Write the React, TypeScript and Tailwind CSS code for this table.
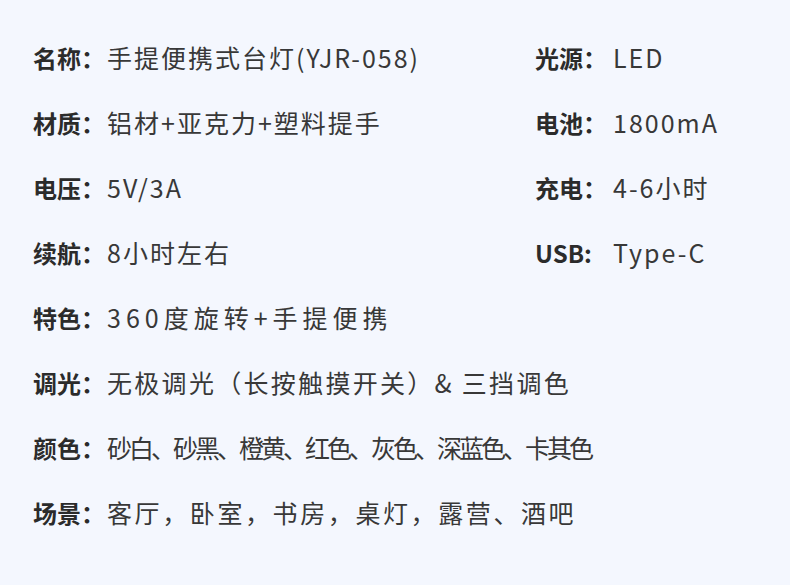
import React from 'react';

const pairs = [
  ['名称：', '手提便携式台灯(YJR-058)', '光源：', 'LED'],
  ['材质：', '铝材+亚克力+塑料提手', '电池：', '1800mA'],
  ['电压：', '5V/3A', '充电：', '4-6小时'],
  ['续航：', '8小时左右', 'USB:', 'Type-C'],
];

const rows = [
  { label: '特色：', value: '360度旋转+手提便携', track: 'tracking-[5px]' },
  { label: '调光：', value: '无极调光（长按触摸开关）& 三挡调色', track: 'tracking-[2.3px]' },
  { label: '颜色：', value: '砂白、砂黑、橙黄、红色、灰色、深蓝色、卡其色', track: 'tracking-[-3px]' },
  { label: '场景：', value: '客厅，卧室，书房，桌灯，露营、酒吧', track: 'tracking-[2.6px]' },
];

export default function App() {
  return (
    <div className="w-[790px] h-[585px] bg-[#f4f7fe] pt-[25px] pl-[33px] text-[25px] leading-none font-['Noto_Sans_CJK_SC',sans-serif]">
      {pairs.map(([l1, v1, l2, v2]) => (
        <div key={l1} className="flex h-[65px] items-center">
          <div className="flex w-[502px] items-center">
            <span className="w-[74px] shrink-0 whitespace-nowrap text-[24px] font-bold text-[#2b2b2b]">{l1}</span>
            <span className="whitespace-nowrap text-[#383838] tracking-[2px]">{v1}</span>
          </div>
          <div className="flex items-center">
            <span className="w-[78px] shrink-0 whitespace-nowrap text-[24px] font-bold text-[#2b2b2b]">{l2}</span>
            <span className="whitespace-nowrap text-[#383838] tracking-[2px]">{v2}</span>
          </div>
        </div>
      ))}
      {rows.map((r) => (
        <div key={r.label} className="flex h-[65px] items-center">
          <span className="w-[74px] shrink-0 whitespace-nowrap text-[24px] font-bold text-[#2b2b2b]">{r.label}</span>
          <span className={`whitespace-nowrap text-[#383838] ${r.track}`}>{r.value}</span>
        </div>
      ))}
    </div>
  );
}
